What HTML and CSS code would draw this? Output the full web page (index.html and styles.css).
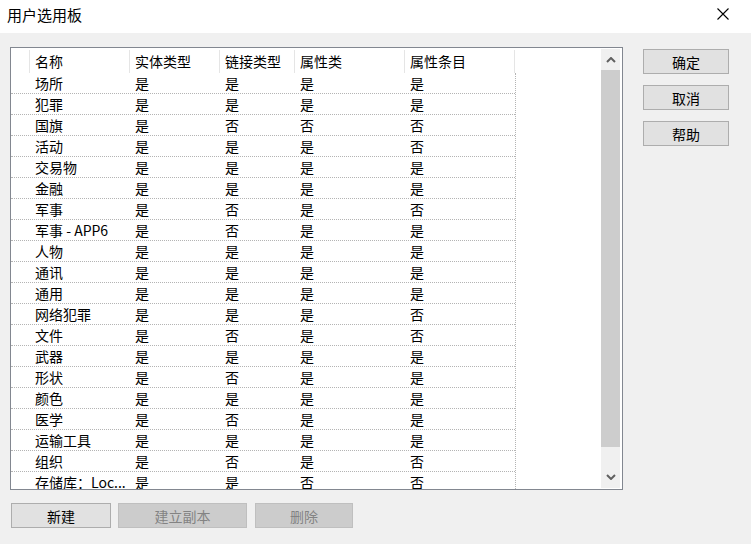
FILE: index.html
```html
<!DOCTYPE html>
<html lang="zh-CN">
<head>
    <meta charset="UTF-8">
    <title>用户选用板</title>
    <link rel="stylesheet" href="styles.css">
</head>
<body>
    <div class="titlebar">
        <span class="title">用户选用板</span>
        <svg class="close" width="12" height="12" viewBox="0 0 12 12">
            <path d="M0.5 0.5 L11.5 11.5 M11.5 0.5 L0.5 11.5" stroke="#000" stroke-width="1.1" fill="none"/>
        </svg>
    </div>

    <div class="main">
        <div class="left">
            <div class="listbox">
                <div class="grid">
                    <div class="header">
                        <div class="hcell c0"></div>
                        <div class="hcell c1">名称</div>
                        <div class="hcell c2">实体类型</div>
                        <div class="hcell c3">链接类型</div>
                        <div class="hcell c4">属性类</div>
                        <div class="hcell c5">属性条目</div>
                    </div>
                    <div class="rows" id="rows"></div>
                </div>
                <div class="scrollbar">
                    <div class="sb-btn">
                        <svg width="10" height="6" viewBox="0 0 10 6"><path d="M1 5 L5 1 L9 5" stroke="#606060" stroke-width="2" fill="none"/></svg>
                    </div>
                    <div class="sb-thumb"></div>
                    <div class="sb-track">
                        <svg width="10" height="6" viewBox="0 0 10 6"><path d="M1 1 L5 5 L9 1" stroke="#606060" stroke-width="2" fill="none"/></svg>
                    </div>
                </div>
            </div>
            <div class="bottom-buttons">
                <button class="btn btn-new">新建</button>
                <button class="btn btn-copy" disabled>建立副本</button>
                <button class="btn btn-del" disabled>删除</button>
            </div>
        </div>
        <div class="side-buttons">
            <button class="btn side">确定</button>
            <button class="btn side">取消</button>
            <button class="btn side">帮助</button>
        </div>
    </div>

    <script>
        // palette rows: name, entity, link, attribute class, attribute entry
        const data = [
            ["场所", "是", "是", "是", "是"],
            ["犯罪", "是", "是", "是", "是"],
            ["国旗", "是", "否", "否", "否"],
            ["活动", "是", "是", "是", "否"],
            ["交易物", "是", "是", "是", "是"],
            ["金融", "是", "是", "是", "是"],
            ["军事", "是", "否", "是", "否"],
            ["军事 - APP6", "是", "否", "是", "是"],
            ["人物", "是", "是", "是", "是"],
            ["通讯", "是", "是", "是", "是"],
            ["通用", "是", "是", "是", "是"],
            ["网络犯罪", "是", "是", "是", "否"],
            ["文件", "是", "否", "是", "否"],
            ["武器", "是", "是", "是", "是"],
            ["形状", "是", "否", "是", "是"],
            ["颜色", "是", "是", "是", "是"],
            ["医学", "是", "否", "是", "是"],
            ["运输工具", "是", "是", "是", "是"],
            ["组织", "是", "否", "是", "否"],
            ["存储库：Loc...", "是", "是", "否", "否"]
        ];

        const rows = document.getElementById("rows");
        data.forEach(function(item) {
            let row = document.createElement("div");
            row.className = "row";
            row.innerHTML = '<div class="cell c0"></div>' +
                item.map((v, i) => '<div class="cell c' + (i + 1) + '">' + v + '</div>').join('');
            rows.appendChild(row);
        });
    </script>
</body>
</html>
```

FILE: styles.css
```css
body {
    margin: 0;
    width: 751px;
    height: 544px;
    background-color: #f0f0f0;
    font-family: "Noto Sans CJK SC", "Noto Sans", sans-serif;
    font-size: 14px;
    color: #000;
    overflow: hidden;
}

.titlebar {
    height: 33px;
    background-color: #fff;
    display: flex;
    align-items: center;
    padding-left: 7px;
    padding-right: 22px;
    justify-content: space-between;
    box-sizing: border-box;
}

.title {
    font-size: 15px;
    line-height: 20px;
    margin-top: -3px;
}

.close {
    margin-top: -5px;
}

.main {
    display: flex;
    padding-top: 14px;
    padding-left: 10px;
}

.left {
    display: flex;
    flex-direction: column;
}

.listbox {
    width: 613px;
    height: 443px;
    box-sizing: border-box;
    border: 1px solid #828790;
    background-color: #fff;
    display: flex;
    overflow: hidden;
}

.grid {
    width: 590px;
    overflow: hidden;
}

.header {
    display: flex;
    height: 25px;
    box-sizing: border-box;
    padding-top: 2px;
}

.hcell {
    box-sizing: border-box;
    border-right: 1px solid #e5e5e5;
    padding-left: 5px;
    line-height: 22px;
    white-space: nowrap;
}

.c0 { width: 19px; }
.c1 { width: 100px; }
.c2 { width: 90px; }
.c3 { width: 75px; }
.c4 { width: 110px; }
.c5 { width: 110px; }

.rows {
    width: 504px;
    border-right: 1px dotted #b4b4b4;
    height: 420px;
}

.row {
    display: flex;
    height: 21px;
    box-sizing: border-box;
    border-bottom: 1px dotted #b4b4b4;
}

.cell {
    box-sizing: border-box;
    padding-left: 5px;
    line-height: 20px;
    white-space: nowrap;
    overflow: hidden;
}

.cell.c5 {
    width: 109px;
}

.scrollbar {
    width: 19px;
    margin: 1px 0 1px 0;
    background-color: #f0f0f0;
    display: flex;
    flex-direction: column;
}

.sb-btn {
    height: 21px;
    display: flex;
    justify-content: center;
    align-items: center;
}

.sb-thumb {
    height: 377px;
    background-color: #cdcdcd;
}

.sb-track {
    flex: 1;
    display: flex;
    justify-content: center;
    align-items: flex-end;
    padding-bottom: 8px;
}

.btn {
    font-family: "Noto Sans CJK SC", "Noto Sans", sans-serif;
    font-size: 14px;
    height: 25px;
    background-color: #e1e1e1;
    border: 1px solid #adadad;
    color: #000;
    padding: 0;
    line-height: 20px;
}

.btn:disabled {
    background-color: #cccccc;
    border-color: #bfbfbf;
    color: #838383;
}

.bottom-buttons {
    display: flex;
    margin-top: 13px;
    margin-left: 1px;
}

.btn-new { width: 100px; }
.btn-copy { width: 129px; margin-left: 7px; }
.btn-del { width: 98px; margin-left: 8px; }

.side-buttons {
    display: flex;
    flex-direction: column;
    gap: 11px;
    margin-left: 20px;
    margin-top: 2px;
}

.btn.side {
    width: 86px;
}
```
